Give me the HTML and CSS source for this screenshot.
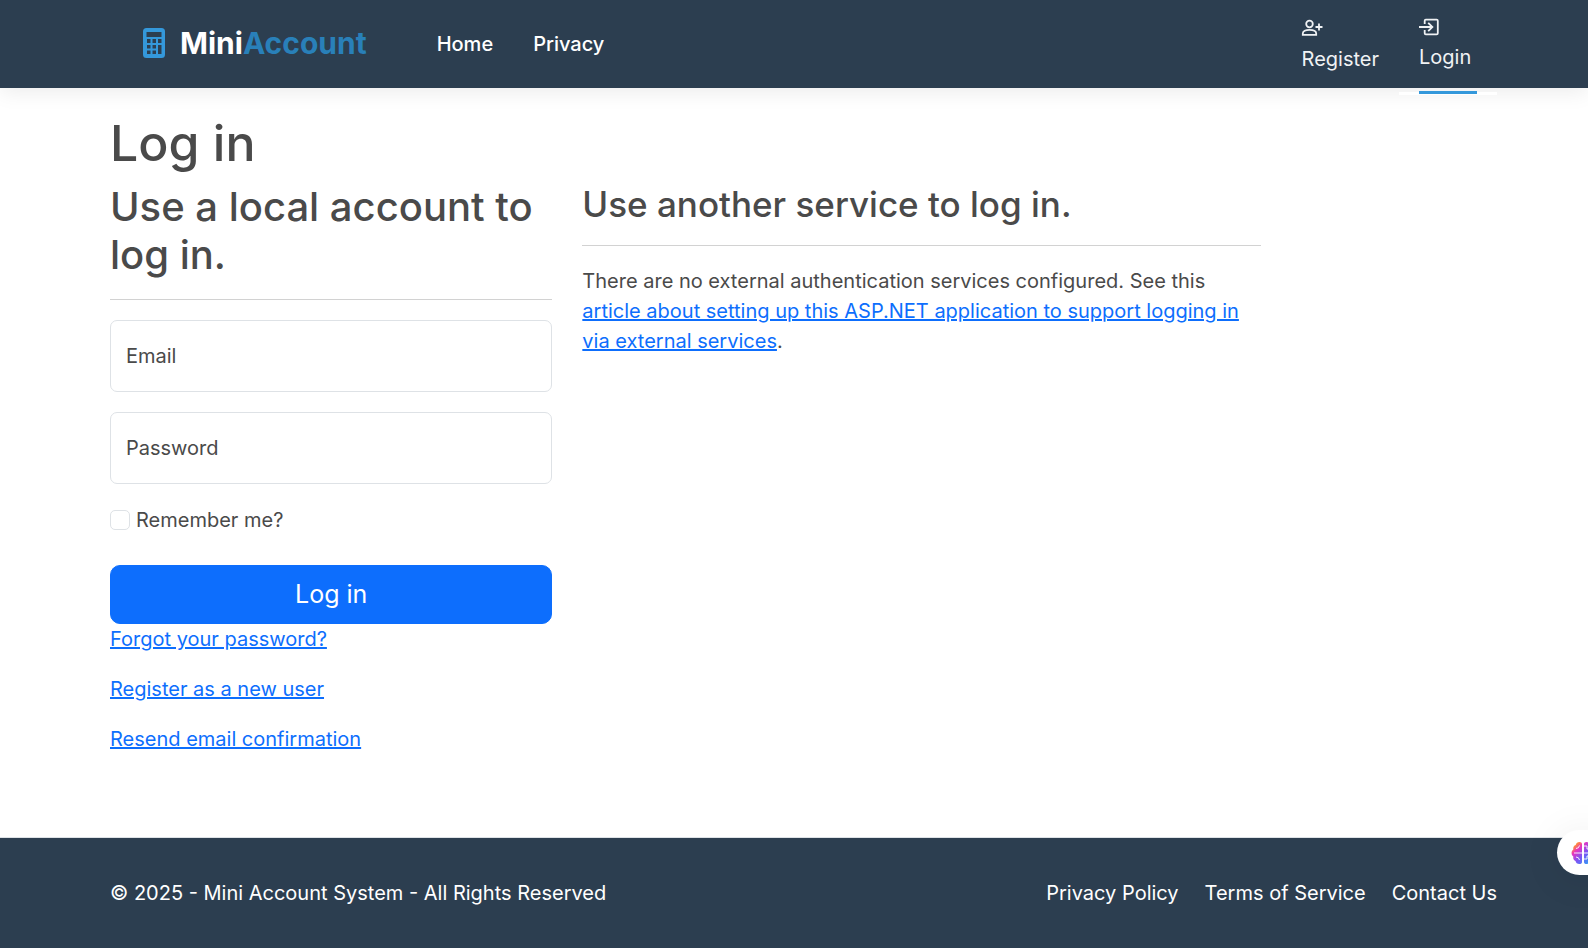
FILE: index.html
```html
<!DOCTYPE html>
<html lang="en">
<head>
<meta charset="utf-8">
<meta name="viewport" content="width=device-width, initial-scale=1">
<title>Log in - Mini Account System</title>
<link rel="stylesheet" href="styles.css">
</head>
<body>
<header class="navbar">
  <a class="brand" href="#">
    <svg class="brand-icon" viewBox="0 0 22 30" aria-hidden="true"><path fill="currentColor" fill-rule="evenodd" d="M3.500 0h15A3.500 3.500 0 0 1 22 3.500v23a3.500 3.500 0 0 1-3.500 3.500h-15A3.500 3.500 0 0 1 0 26.500v-23A3.500 3.500 0 0 1 3.500 0zM3.500 4v5h15V4zM4 11v4h3.500v-4zM9.500 11v4H13v-4zM15 11v4h3.500v-4zM4 17v3.500h3.500V17zM9.500 17v3.500H13V17zM15 17v9h3.500v-9zM4 22.500V26h3.500v-3.500zM9.500 22.500V26H13v-3.500z"/></svg>
    <span class="brand-name">Mini<span class="brand-accent">Account</span></span>
  </a>
  <nav class="nav-main">
    <a href="#">Home</a>
    <a href="#">Privacy</a>
  </nav>
  <nav class="nav-account">
    <a class="account-link register" href="#">
      <svg class="account-icon" viewBox="0 0 20 20" fill="none" stroke="currentColor" stroke-width="1.800" aria-hidden="true"><circle cx="7.500" cy="7" r="3.300"/><path d="M.8 17.800v-1.300c0-2.300 2.700-3.700 6.700-3.700s6.700 1.400 6.700 3.700v1.300zM17 6.500v7M13.500 10h7"/></svg>
      <span>Register</span>
    </a>
    <a class="account-link login" href="#" aria-current="page">
      <svg class="account-icon" viewBox="0 0 20 20" fill="none" stroke="currentColor" stroke-width="1.800" aria-hidden="true"><path d="M5.700 7V3.800q0-1.100 1.100-1.100h10.800q1.200 0 1.200 1.100v12.400q0 1.100-1.200 1.100H6.800q-1.100 0-1.100-1.100V13M0 10h13M9.200 5.800l4.200 4.200-4.200 4.200"/></svg>
      <span>Login</span>
    </a>
  </nav>
</header>
<main class="page">
  <h1>Log in</h1>
  <div class="columns">
    <section class="local">
      <form>
        <h2>Use a local account to log in.</h2>
        <hr>
        <div class="field">
          <input id="email" type="email" autocomplete="username">
          <label for="email">Email</label>
        </div>
        <div class="field">
          <input id="password" type="password" autocomplete="current-password">
          <label for="password">Password</label>
        </div>
        <div class="remember">
          <input id="remember" type="checkbox">
          <label for="remember">Remember me?</label>
        </div>
        <button class="submit" type="submit">Log in</button>
        <div class="links">
          <a href="#">Forgot your password?</a>
          <a href="#">Register as a new user</a>
          <a href="#">Resend email confirmation</a>
        </div>
      </form>
    </section>
    <section class="external">
      <h3>Use another service to log in.</h3>
      <hr>
      <p>There are no external authentication services configured. See this <a href="#">article about setting up this ASP.NET application to support logging in via external services</a>.</p>
    </section>
  </div>
</main>
<footer class="footer">
  <span>© 2025 - Mini Account System - All Rights Reserved</span>
  <nav class="footer-links">
    <a href="#">Privacy Policy</a>
    <a href="#">Terms of Service</a>
    <a href="#">Contact Us</a>
  </nav>
</footer>
<button class="assistant" type="button" aria-label="Assistant">
  <svg class="assistant-icon" viewBox="0 0 24 24" aria-hidden="true">
    <defs><linearGradient id="brain" x1="0" y1="0" x2="1" y2="1"><stop offset="0" stop-color="#ffa52e"/><stop offset=".16" stop-color="#ff8a3c"/><stop offset=".3" stop-color="#e833c0"/><stop offset=".55" stop-color="#7a55f5"/><stop offset="1" stop-color="#17b8f5"/></linearGradient></defs>
    <path fill="url(#brain)" d="M11 3v18c0 1.500-1 2-2.500 2C6 23 5 22 4.500 20 2.500 19.500 2 17.500 2.300 15.500 0 14 0 10 2.300 8.500 2 6 3 4.500 4.700 4 5.200 2 6.500 1 8.500 1 10 1 11 1.700 11 3zm2 0v18c0 1.500 1 2 2.500 2 2.500 0 3.500-1 4-3 2-.5 2.500-2.500 2.200-4.500 2.300-1.500 2.300-5.500 0-7 .3-2.500-.7-4-2.400-4.500C18.800 2 17.500 1 15.500 1 14 1 13 1.700 13 3z"/>
    <path fill="none" stroke="#fff" stroke-width=".9" d="M3 12h8M5 7.500q3 0 3.500-3M5 16q3 0 3.500 3M13 5h3v3h3M13 12h8M13 18h3v-3h3"/>
  </svg>
</button>
</body>
</html>
```
FILE: styles.css
```css
* { box-sizing: border-box; }

html { font-size: 20px; }

body {
  margin: 0;
  min-height: 100vh;
  display: flex;
  flex-direction: column;
  overflow-x: hidden;
  font-family: Inter, "Liberation Sans", sans-serif;
  font-size: 20px;
  line-height: 30px;
  color: #4a4a4a;
  background: #fff;
}

h1, h2, h3, p { margin: 0; }
h1, h2, h3 { font-weight: 500; line-height: 1.2; }
h1 { font-size: 50px; margin-bottom: 10px; }
h2 { font-size: 40px; }
h3 { font-size: 35px; }

a { color: #0d6efd; }

hr {
  margin: 20px 0;
  border: 0;
  border-top: 1px solid #d2d2d2;
}

.navbar {
  height: 88px;
  display: flex;
  align-items: center;
  padding: 0 91px 0 143px;
  background: #2c3e50;
  box-shadow: 0 4px 20px rgba(0, 0, 0, .08);
}

.navbar a { text-decoration: none; color: #fff; }

.navbar .brand {
  display: flex;
  align-items: center;
  gap: 15px;
  padding-bottom: 2px;
  font-size: 30px;
  font-weight: 700;
}

.brand-icon { width: 22px; height: 30px; color: #3498db; }
.brand-accent { color: #2980b9; }

.nav-main {
  display: flex;
  gap: 40px;
  margin-left: 70px;
  font-weight: 500;
}

.nav-account {
  display: flex;
  align-self: stretch;
  margin-left: auto;
}

.navbar .account-link {
  position: relative;
  display: flex;
  flex-direction: column;
  align-items: flex-start;
  padding: 17px 20px 0;
  color: #f0f2f4;
}

.account-icon { width: 20px; height: 20px; overflow: visible; }
.register .account-icon { margin-bottom: 7px; }
.login .account-icon { margin-bottom: 5px; }
.login { min-width: 98px; }

.login::before,
.login::after {
  content: "";
  position: absolute;
  height: 3px;
}

.login::before { top: 92px; left: 0; right: 0; background: #fff; }
.login::after { top: 91px; left: 20px; right: 20px; background: #3498db; }

.page {
  flex: 1;
  padding: 25px 91px 60px 110px;
}

.columns {
  display: grid;
  grid-template-columns: repeat(12, 1fr);
  align-items: start;
  column-gap: 30px;
}

.local { grid-column: span 4; }
.external { grid-column: span 6; }

.field { position: relative; margin-bottom: 20px; }

.field input {
  display: block;
  width: 100%;
  height: 72px;
  padding: 20px 15px;
  border: 1px solid #dee2e6;
  border-radius: 7px;
  background: #fff;
  font: inherit;
  color: inherit;
}

.field label {
  position: absolute;
  top: 21px;
  left: 16px;
  pointer-events: none;
}

.remember {
  display: flex;
  align-items: center;
  gap: 6px;
  margin: 21px 0 30px;
}

.remember input {
  appearance: none;
  width: 20px;
  height: 20px;
  margin: 0;
  border: 1px solid #dee2e6;
  border-radius: 5px;
  background: #fff;
}

.remember input:checked { background: #0d6efd; }

.submit {
  display: block;
  width: 100%;
  padding: 10px 20px;
  border: 1px solid #0d6efd;
  border-radius: 10px;
  background: #0d6efd;
  color: #fff;
  font: inherit;
  font-size: 25px;
  line-height: 37px;
}

.links {
  display: flex;
  flex-direction: column;
  align-items: flex-start;
  gap: 20px;
}

.footer {
  display: flex;
  align-items: center;
  justify-content: space-between;
  height: 111px;
  padding: 0 91px 0 110px;
  border-top: 1px solid #dee2e6;
  background: #2c3e50;
  color: #fff;
}

.footer-links { display: flex; gap: 26px; }
.footer-links a { color: #fff; text-decoration: none; }

.assistant {
  position: fixed;
  right: -17px;
  bottom: 73px;
  width: 48px;
  height: 45px;
  padding: 0 0 0 14px;
  border: 0;
  border-radius: 23px 0 0 23px;
  background: #fff;
  box-shadow: 0 4px 40px rgba(0, 0, 0, .08);
}

.assistant-icon { display: block; width: 24px; height: 24px; }
```
